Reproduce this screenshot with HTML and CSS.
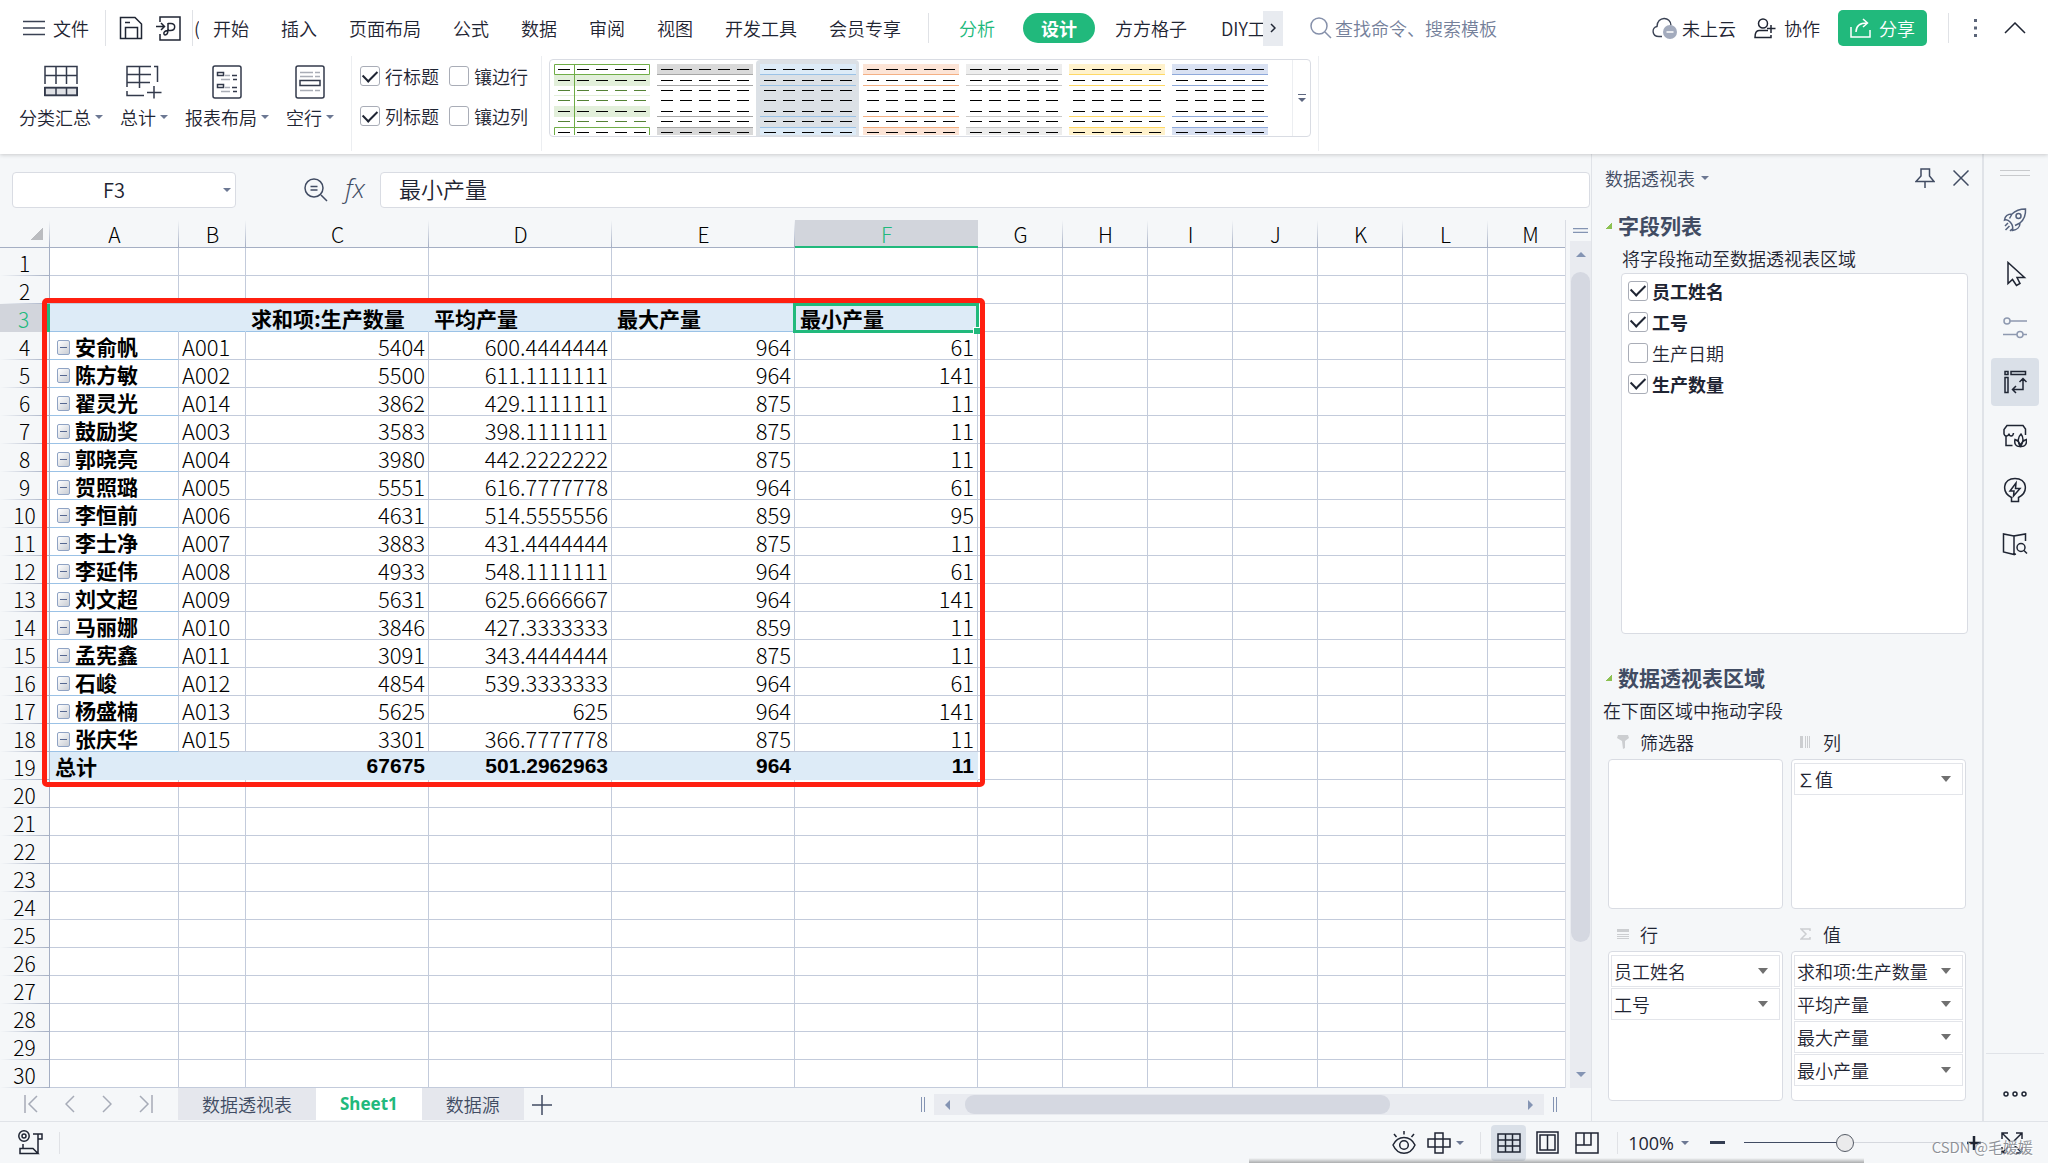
FILE: index.html
```html
<!DOCTYPE html>
<html lang="zh-CN">
<head>
<meta charset="utf-8">
<meta name="viewport" content="width=device-width, initial-scale=1">
<title>数据透视表</title>
<link rel="stylesheet" href="styles.css">
</head>
<body>
<svg class="defs" aria-hidden="true">
  <symbol id="dashes" viewBox="0 0 96 71">
    <path stroke-width="1" stroke-dasharray="12 7" fill="none" d="M4 5.500H92M4 16.500H92M4 26.500H92M4 36.500H92M4 47.500H92M4 57.500H92M4 68.500H92"/>
  </symbol>
  <symbol id="style-light" viewBox="0 0 96 71">
    <path class="band" d="M0 0H96V10H0zM0 63H96V71H0z"/>
    <path class="rule" d="M0 10.500H96M0 21.500H96M0 52.500H96M0 63.500H96"/>
    <use href="#dashes" stroke="#000"/>
  </symbol>
</svg>

<header class="ribbon">
  <div class="topbar">
    <button class="file"><svg width="22" height="16" viewBox="0 0 22 16"><path d="M0 1.500H22M0 8H22M0 14.500H22" stroke="#3a4254" stroke-width="1.300"/></svg>文件</button>
    <span class="vline tall"></span>
    <button class="quick" aria-label="保存"><svg width="24" height="24" viewBox="0 0 24 24"><path d="M1.500 1.500H16L22.500 8V22.500H1.500zM6.500 22.500V11.500H18.500V22.500M6 6.500H11"/></svg></button>
    <button class="quick" aria-label="输出"><svg width="25" height="25" viewBox="0 0 25 25"><path d="M4 6V1H24V24H4V18M0 10.500H8M5 7L8.500 10.500L5 14M12 7V14C12 20 7 20 8 16.500C9 14 12 14.500 14.500 14.500C20 14.500 20 7.500 15 7.500H12"/></svg></button>
    <span class="vline tall cut"></span>
    <span class="sliver">(</span>
    <nav class="tabs main-tabs">
      <a href="#">开始</a><a href="#">插入</a><a href="#">页面布局</a><a href="#">公式</a><a href="#">数据</a><a href="#">审阅</a><a href="#">视图</a><a href="#">开发工具</a><a href="#">会员专享</a>
    </nav>
    <span class="vline context"></span>
    <nav class="tabs">
      <a href="#" class="green">分析</a><a href="#" class="pill">设计</a><a href="#" class="addon">方方格子</a><a href="#" class="clip">DIY工</a>
    </nav>
    <button class="more-tabs" aria-label="更多"><svg width="6" height="10" viewBox="0 0 6 10"><path d="M1 1L5 5L1 9"/></svg></button>
    <label class="search"><svg width="22" height="22" viewBox="0 0 22 22"><circle cx="9" cy="9" r="8"/><path d="M15 15L21 21"/></svg><input type="text" placeholder="查找命令、搜索模板" aria-label="搜索"></label>
    <div class="account">
      <button class="cloud"><svg width="25" height="22" viewBox="0 0 25 22"><path d="M10 19.500H7C-.5 19.500-.5 10.500 5 9.500C5-1 19-1 19 8.500" fill="none" stroke="#3a4254" stroke-width="1.400"/><circle cx="18" cy="15" r="7" fill="#a3abbd" stroke="none"/><path d="M14.500 15H21.500" stroke="#fff" stroke-width="1.500"/></svg>未上云</button>
      <button class="collab"><svg width="22" height="21" viewBox="0 0 22 21"><circle cx="9" cy="5.500" r="4.500"/><path d="M14 12.500H5C2 12.500 1 15 1 19.500H17V17M17 7V15M13 10.500H21.500"/></svg>协作</button>
      <button class="share"><svg width="21" height="20" viewBox="0 0 21 20"><path d="M1 9V19H20V12M6 14C6 8 9 5 17 5M13 1L17.500 5L13 9"/></svg>分享</button>
      <span class="vline"></span>
      <button class="dots" aria-label="更多"><svg width="3" height="18" viewBox="0 0 3 18"><path d="M0 0H3V3H0zM0 7.500H3V10.500H0zM0 15H3V18H0z" fill="#5b6478" stroke="none"/></svg></button>
      <button class="fold" aria-label="收起"><svg width="22" height="12" viewBox="0 0 22 12"><path d="M1 11L11 1L21 11"/></svg></button>
    </div>
  </div>
  <div class="tools">
    <button class="tool"><svg width="34" height="32" viewBox="0 0 34 32"><path d="M.7 22.700H33.300V30.300H.7z" fill="#dfe1e5"/><path d="M1 19V1.500H33V19M12 1.500V19M22.500 1.500V19M1 10.500H33M1 22.500H33V30.500H1zM12 22.500V30.500M22.500 22.500V30.500"/></svg><span>分类汇总<i class="caret"></i></span></button>
    <button class="tool"><svg width="36" height="34" viewBox="0 0 36 34"><path d="M25 1.500H1V22M1 9.500H25M1 17.500H24M13.500 1.500V23M28 1.500H31.500V17M1 26V30.500H18M28 21V33.500M21 27.500H35.500"/></svg><span>总计<i class="caret"></i></span></button>
    <button class="tool"><svg width="30" height="34" viewBox="0 0 30 34"><rect x="1" y="1" width="28" height="32" rx="2"/><path d="M5.500 7.500H11.500V10.500H5.500zM5.500 19.500H11.500V22.500H5.500zM20 10.500H25M21 14.500H25M20 22.500H25M21 26.500H25"/><path class="pale" d="M13 10.500H18M9 14.500H18M13 22.500H18M9 26.500H18"/></svg><span>报表布局<i class="caret"></i></span></button>
    <button class="tool"><svg width="30" height="34" viewBox="0 0 30 34"><rect x="1" y="1" width="28" height="32" rx="2"/><path d="M5 15.500H25V20.500H5z"/><path class="pale" d="M5 7.500H18M20 7.500H25M5 11.500H18M20 11.500H25M5 25.500H18M20 25.500H25"/></svg><span>空行<i class="caret"></i></span></button>
    <span class="vline"></span>
    <div class="checks">
      <label><input type="checkbox" checked>行标题</label><label><input type="checkbox">镶边行</label>
      <label><input type="checkbox" checked>列标题</label><label><input type="checkbox">镶边列</label>
    </div>
    <span class="vline"></span>
    <div class="gallery">
      <button class="thumb" aria-label="样式 1"><svg width="96" height="71" viewBox="0 0 96 71"><path fill="#e2efda" d="M0 11H96V22H0zM0 31H96V32H0zM0 42H96V53H0z"/><path fill="none" stroke="#70ad47" d="M.5 .5H95.500V10.500H.5zM20.500 0V71M.5 71V63.500H95.500V71"/><path stroke="#548235" stroke-dasharray="12 7" d="M4 26.500H92M4 36.500H92M4 57.500H92"/><path stroke="#000" stroke-dasharray="12 7" d="M4 5.500H92M4 16.500H92M4 47.500H92M4 68.500H92"/></svg></button>
      <button class="thumb grey" aria-label="样式 2"><svg width="96" height="71"><use href="#style-light"/></svg></button>
      <button class="thumb blue" aria-label="样式 3"><svg width="96" height="71"><use href="#style-light"/></svg></button>
      <button class="thumb orange" aria-label="样式 4"><svg width="96" height="71"><use href="#style-light"/></svg></button>
      <button class="thumb silver" aria-label="样式 5"><svg width="96" height="71"><use href="#style-light"/></svg></button>
      <button class="thumb yellow" aria-label="样式 6"><svg width="96" height="71"><use href="#style-light"/></svg></button>
      <button class="thumb indigo" aria-label="样式 7"><svg width="96" height="71"><use href="#style-light"/></svg></button>
      <button class="expand" aria-label="更多样式"><svg width="8" height="8" viewBox="0 0 8 8"><path d="M0 0H8V1H0zM0 4H8L4 8z" fill="#5d6780"/></svg></button>
    </div>
    <span class="vline"></span>
  </div>
</header>

<main class="work">
  <section class="sheet">
    <div class="formula">
      <div class="namebox"><input type="text" value="F3" aria-label="名称框"><i class="caret"></i></div>
      <button class="lens" aria-label="浏览"><svg width="24" height="24" viewBox="0 0 24 24"><circle cx="10" cy="10" r="9"/><path d="M17 17L23 23M6.500 8.500H13.500M6.500 12H13.500"/></svg></button>
      <button class="fx">fx</button>
      <input class="content" type="text" value="最小产量" aria-label="编辑栏">
    </div>

    <div class="gridrow">
      <div class="gridwrap">
        <table class="grid">
          <colgroup><col class="c-head"><col class="c-a"><col class="c-b"><col class="c-wide" span="4"><col class="c-std" span="7"></colgroup>
          <thead><tr><th class="corner"><th>A<th>B<th>C<th>D<th>E<th class="on">F<th>G<th>H<th>I<th>J<th>K<th>L<th>M</tr></thead>
          <tbody>
          <tr><th>1<td><td><td><td><td><td><td><td><td><td><td><td><td></tr>
          <tr><th>2<td><td><td><td><td><td><td><td><td><td><td><td><td></tr>
          <tr class="fill"><th class="on">3<td><td><td>求和项:生产数量<td>平均产量<td>最大产量<td class="active">最小产量<td><td><td><td><td><td><td></tr>
          <tr class="data"><th>4<td><button></button>安俞帆<td>A001<td>5404<td>600.4444444<td>964<td>61<td><td><td><td><td><td><td></tr>
          <tr class="data"><th>5<td><button></button>陈方敏<td>A002<td>5500<td>611.1111111<td>964<td>141<td><td><td><td><td><td><td></tr>
          <tr class="data"><th>6<td><button></button>翟灵光<td>A014<td>3862<td>429.1111111<td>875<td>11<td><td><td><td><td><td><td></tr>
          <tr class="data"><th>7<td><button></button>鼓励奖<td>A003<td>3583<td>398.1111111<td>875<td>11<td><td><td><td><td><td><td></tr>
          <tr class="data"><th>8<td><button></button>郭晓亮<td>A004<td>3980<td>442.2222222<td>875<td>11<td><td><td><td><td><td><td></tr>
          <tr class="data"><th>9<td><button></button>贺照璐<td>A005<td>5551<td>616.7777778<td>964<td>61<td><td><td><td><td><td><td></tr>
          <tr class="data"><th>10<td><button></button>李恒前<td>A006<td>4631<td>514.5555556<td>859<td>95<td><td><td><td><td><td><td></tr>
          <tr class="data"><th>11<td><button></button>李士净<td>A007<td>3883<td>431.4444444<td>875<td>11<td><td><td><td><td><td><td></tr>
          <tr class="data"><th>12<td><button></button>李延伟<td>A008<td>4933<td>548.1111111<td>964<td>61<td><td><td><td><td><td><td></tr>
          <tr class="data"><th>13<td><button></button>刘文超<td>A009<td>5631<td>625.6666667<td>964<td>141<td><td><td><td><td><td><td></tr>
          <tr class="data"><th>14<td><button></button>马丽娜<td>A010<td>3846<td>427.3333333<td>859<td>11<td><td><td><td><td><td><td></tr>
          <tr class="data"><th>15<td><button></button>孟宪鑫<td>A011<td>3091<td>343.4444444<td>875<td>11<td><td><td><td><td><td><td></tr>
          <tr class="data"><th>16<td><button></button>石峻<td>A012<td>4854<td>539.3333333<td>964<td>61<td><td><td><td><td><td><td></tr>
          <tr class="data"><th>17<td><button></button>杨盛楠<td>A013<td>5625<td>625<td>964<td>141<td><td><td><td><td><td><td></tr>
          <tr class="data"><th>18<td><button></button>张庆华<td>A015<td>3301<td>366.7777778<td>875<td>11<td><td><td><td><td><td><td></tr>
          <tr class="fill total"><th>19<td>总计<td><td>67675<td>501.2962963<td>964<td>11<td><td><td><td><td><td><td></tr>
          <tr><th>20<td><td><td><td><td><td><td><td><td><td><td><td><td></tr>
          <tr><th>21<td><td><td><td><td><td><td><td><td><td><td><td><td></tr>
          <tr><th>22<td><td><td><td><td><td><td><td><td><td><td><td><td></tr>
          <tr><th>23<td><td><td><td><td><td><td><td><td><td><td><td><td></tr>
          <tr><th>24<td><td><td><td><td><td><td><td><td><td><td><td><td></tr>
          <tr><th>25<td><td><td><td><td><td><td><td><td><td><td><td><td></tr>
          <tr><th>26<td><td><td><td><td><td><td><td><td><td><td><td><td></tr>
          <tr><th>27<td><td><td><td><td><td><td><td><td><td><td><td><td></tr>
          <tr><th>28<td><td><td><td><td><td><td><td><td><td><td><td><td></tr>
          <tr><th>29<td><td><td><td><td><td><td><td><td><td><td><td><td></tr>
          <tr><th>30<td><td><td><td><td><td><td><td><td><td><td><td><td></tr>
          </tbody>
        </table>
        <div class="redbox"></div>
      </div>
      <div class="vscroll">
        <svg class="split" width="15" height="5" viewBox="0 0 15 5"><path d="M0 .5H15M0 4.500H15" stroke="#8494b3"/></svg>
        <div class="vtrack"><i class="tri up"></i><div class="vthumb"></div><i class="tri down"></i></div>
      </div>
    </div>

    <div class="sheetbar">
      <div class="sheetnav">
        <button aria-label="第一张"><svg width="14" height="18" viewBox="0 0 14 18"><path d="M1 0V18M13 1L5 9L13 17"/></svg></button>
        <button aria-label="上一张"><svg width="10" height="18" viewBox="0 0 10 18"><path d="M9 1L1 9L9 17"/></svg></button>
        <button aria-label="下一张"><svg width="10" height="18" viewBox="0 0 10 18"><path d="M1 1L9 9L1 17"/></svg></button>
        <button aria-label="最后一张"><svg width="14" height="18" viewBox="0 0 14 18"><path d="M13 0V18M1 1L9 9L1 17"/></svg></button>
      </div>
      <button class="stab">数据透视表</button><button class="stab current">Sheet1</button><button class="stab">数据源</button>
      <button class="addsheet" aria-label="新建"><svg width="20" height="20" viewBox="0 0 20 20"><path d="M10 0V20M0 10H20" stroke="#414c63" stroke-width="1.500"/></svg></button>
      <div class="hscroll">
        <i class="grip"></i>
        <div class="htrack"><i class="tri left"></i><div class="hthumb"></div><i class="tri right"></i></div>
        <i class="grip"></i>
      </div>
    </div>
  </section>

  <aside class="panel">
    <div class="panelhead">
      <button class="ptitle">数据透视表<i class="caret"></i></button>
      <button class="pin" aria-label="固定"><svg width="20" height="20" viewBox="0 0 20 20"><path d="M6 1H14.500V8L19 13.500H1L6 8zM10 13.500V20"/></svg></button>
      <button aria-label="关闭"><svg width="16" height="16" viewBox="0 0 16 16"><path d="M.5 .5L15.500 15.500M15.500 .5L.5 15.500"/></svg></button>
    </div>
    <h2><i></i>字段列表</h2>
    <p class="hint indent">将字段拖动至数据透视表区域</p>
    <div class="fields">
      <label class="used"><input type="checkbox" checked>员工姓名</label>
      <label class="used"><input type="checkbox" checked>工号</label>
      <label><input type="checkbox">生产日期</label>
      <label class="used"><input type="checkbox" checked>生产数量</label>
    </div>
    <h2><i></i>数据透视表区域</h2>
    <p class="hint">在下面区域中拖动字段</p>
    <div class="areas">
      <section><h3><svg width="12" height="14" viewBox="0 0 12 14"><path d="M1 0H11L12 3L8 6V13L6 14L5 6L0 3z" fill="#ccced1"/></svg>筛选器</h3><div class="drop"></div></section>
      <section><h3><svg width="12" height="12" viewBox="0 0 12 12"><path d="M0 0H3V12H0zM5 0H6V12H5zM7 0H8V12H7zM9 0H10V12H9z" fill="#ccced1"/></svg>列</h3><div class="drop"><button>∑值<i></i></button></div></section>
      <section><h3><svg width="12" height="12" viewBox="0 0 12 12"><path d="M0 1H12V4H0zM0 6H12V7H0zM0 8H12V9H0zM0 10H12V11H0z" fill="#ccced1"/></svg>行</h3><div class="drop"><button>员工姓名<i></i></button><button>工号<i></i></button></div></section>
      <section><h3><svg width="12" height="12" viewBox="0 0 12 12"><path d="M10 3V1H1L6 6L1 11H10V9" fill="none" stroke="#ccced1" stroke-width="1.500"/></svg>值</h3><div class="drop"><button>求和项:生产数量<i></i></button><button>平均产量<i></i></button><button>最大产量<i></i></button><button>最小产量<i></i></button></div></section>
    </div>
  </aside>

  <nav class="rail">
    <span class="railgrip"></span>
    <button aria-label="推荐" class="slate"><svg width="24" height="24" viewBox="0 0 24 24"><path d="M22.500 1C14 1 11 4 9 6C5 6 2 8 1.500 12C5 10.500 11 16 9.500 22.500C14 22 17 19 17 15C20.500 12 23 8 22.500 1zM9 6L6.500 10.500M17 15L12 17.500M5 15L2 18M6.500 18L2.500 22M9 21L7 23"/><circle cx="15.500" cy="8" r="2.500"/></svg></button>
    <button aria-label="选择"><svg width="24" height="26" viewBox="0 0 24 26"><path d="M5 1.500V22.500L9.500 18.500L13.500 24.500L17 22.500L14 16.500H21.500z"/></svg></button>
    <button aria-label="属性" class="mist"><svg width="24" height="22" viewBox="0 0 24 22"><circle cx="4" cy="4" r="3"/><circle cx="17" cy="17.500" r="3"/><path d="M7 4H24M0 17.500H14M20 17.500H24"/></svg></button>
    <button aria-label="数据透视表" class="on"><svg width="24" height="24" viewBox="0 0 24 24"><path d="M2 1.500H5V4.500H2zM8 1.500H22.500V4.500H8zM2 7.500H5V22.500H2zM20 9V19.500H10M16.500 12L20 8.500L23.500 12M13 16L9.500 19.500L13 23"/></svg></button>
    <button aria-label="稻壳"><svg width="24" height="24" viewBox="0 0 24 24"><path d="M22.500 11V5L20 1.500H4L1 5.500V10C2 13 5.500 12.500 6 9.500C6.500 13 10 13 10.500 9M3 12.500V21.500H9.500M17.500 22.500C14 18 15 13 18 10C20.500 13 21 18 17.500 22.500zM12 15.500C11 20 13 23 17.500 22.500C17 19 15 16.500 12 15.500zM23.500 15.500C24 20 22 23 17.500 22.500C18 19 20 16.500 23.500 15.500z"/></svg></button>
    <button aria-label="灵感"><svg width="24" height="26" viewBox="0 0 24 26"><path d="M8.500 24.500V20.500C-2 15 0 1.500 12 1.500S26 15 15.500 20.500V24.500zM13 6L7 14H11L10.500 19L17 11.500H12.500z"/></svg></button>
    <button aria-label="帮助"><svg width="26" height="24" viewBox="0 0 26 24"><path d="M12 4L1.500 2V20L12 22.500V4L23.500 2V9M12 22.500L14 22"/><circle cx="19" cy="15.500" r="4"/><path d="M22 18.500L25 21.500"/></svg></button>
    <button class="raildots" aria-label="更多"><svg width="24" height="6" viewBox="0 0 24 6"><circle cx="3" cy="3" r="2"/><circle cx="12" cy="3" r="2"/><circle cx="21" cy="3" r="2"/></svg></button>
  </nav>
</main>

<footer class="status">
  <button class="macro" aria-label="宏"><svg width="25" height="25" viewBox="0 0 25 25"><circle cx="6" cy="6" r="5.200"/><circle cx="6" cy="6" r="2"/><path d="M15 4H20V23M20 4H24V9H20M5 14V18M2 18.500H15L20 23.500H2z"/></svg></button>
  <span class="vline"></span>
  <div class="views">
    <button aria-label="护眼"><svg width="24" height="24" viewBox="0 0 24 24"><path d="M1 14C6 4 18 4 23 14C18 25 6 25 1 14zM12 0V3.500M2 3L4.500 6M22 3L19.500 6"/><circle cx="12" cy="14" r="4.300"/></svg></button>
    <button class="cross" aria-label="阅读"><svg width="24" height="22" viewBox="0 0 24 22"><path d="M8 1H16V21H8zM1 7H23V15H1z"/></svg><i class="caret"></i></button>
    <span class="vline"></span>
    <button class="viewon" aria-label="普通"><svg width="24" height="20" viewBox="0 0 24 20"><path d="M1 1H23V19H1zM8.500 1V19M15.500 1V19M1 7H23M1 13H23"/></svg></button>
    <button class="page" aria-label="分页"><svg width="23" height="23" viewBox="0 0 23 23"><path d="M1 1H22V22H1zM4 4H19V19H4zM11.500 4V19"/></svg></button>
    <button class="read" aria-label="布局"><svg width="24" height="22" viewBox="0 0 24 22"><path d="M1 1H23V21H1zM1 13H16V1M9 1V13"/></svg></button>
    <span class="vline"></span>
    <button class="percent">100%<i class="caret"></i></button>
    <button class="minus" aria-label="缩小"><svg width="15" height="3" viewBox="0 0 15 3"><path d="M0 0H15V3H0z" fill="#333d52" stroke="none"/></svg></button>
    <input type="range" min="0" max="100" value="46" aria-label="缩放">
    <button class="plus" aria-label="放大"><svg width="14" height="14" viewBox="0 0 14 14"><path d="M7 0V14M0 7H14" stroke-width="2.500"/></svg></button>
    <button class="full" aria-label="全屏"><svg width="22" height="22" viewBox="0 0 22 22"><path d="M1 7V1H7M15 1H21V7M1 15V21H7M21 15V21H15M1 1L9 9M21 1L13 9M1 21L9 13M21 21L13 13"/></svg></button>
  </div>
  <span class="watermark">CSDN @毛媛媛</span>
  <i class="undershadow"></i>
</footer>
</body>
</html>
```
FILE: styles.css
```css
* { box-sizing: border-box; }

:root {
  --bg: #f5f7f9;
  --ink: #1f2533;
  --slate: #414c63;
  --green: #21b97c;
  --line: #c3cbdb;
  --edge: #d9dce3;
}

body {
  margin: 0;
  min-height: 100vh;
  display: flex;
  flex-direction: column;
  overflow: hidden;
  background: var(--bg);
  color: var(--ink);
  font: 350 18px/24px "Noto Sans CJK SC", "Noto Sans", sans-serif;
}

button, input { font: inherit; color: inherit; }
button { border: 0; padding: 0; background: none; display: flex; align-items: center; white-space: nowrap; }
a { color: inherit; text-decoration: none; }
h2, h3, p { margin: 0; }
svg { display: block; flex: none; fill: none; stroke-width: 1.5px; }
.defs { position: absolute; width: 0; height: 0; }

.vline { flex: none; width: 1px; height: 30px; background: #e0e2e6; }
.caret { flex: none; border: 4px solid transparent; border-top-color: #6c7893; border-bottom: 0; }

input[type="checkbox"] {
  appearance: none;
  flex: none;
  display: grid;
  place-items: center;
  width: 20px;
  height: 20px;
  margin: 0;
  border: 1px solid #a9adb7;
  border-radius: 3px;
  background: #fff;
}
input[type="checkbox"]:checked::after {
  content: "";
  width: 12px;
  height: 7px;
  margin-bottom: 4px;
  border: solid var(--ink);
  border-width: 0 0 2px 2px;
  transform: rotate(-45deg);
}

/* ribbon */
.ribbon { position: relative; z-index: 1; background: #fff; box-shadow: 0 1px 4px #0000002e; }
.topbar { display: flex; align-items: center; height: 56px; padding: 0 22px 0 23px; }
.topbar svg { stroke: var(--ink); }
.file { gap: 8px; }
.vline.tall { height: 36px; margin: 0 13px 0 16px; }
.quick { margin-right: 13px; }
.vline.cut { margin: 0 1px 0 -2px; }
.sliver { width: 5px; overflow: hidden; margin-right: 14px; }
.tabs { display: flex; align-items: center; white-space: nowrap; }
.main-tabs { gap: 32px; }
.context { margin: 0 30px 0 27px; }
.green { color: var(--green); }
.pill { margin: 0 20px 0 28px; padding: 3px 18px; border-radius: 15px; background: var(--green); color: #fff; font-weight: 700; }
.addon { margin-right: 34px; }
.clip { width: 42px; overflow: hidden; }
.more-tabs { width: 20px; height: 35px; justify-content: center; background: #e8ebf0; }
.search { display: flex; align-items: center; gap: 3px; margin-left: 27px; color: #74809a; }
.search .search svg, .search svg { stroke: #8590aa; }
.search input { width: 180px; padding: 0; border: 0; outline: 0; background: none; }
.search input::placeholder { color: #74809a; opacity: 1; }
.account { display: flex; align-items: center; margin-left: auto; }
.cloud { gap: 5px; }
.collab { gap: 8px; margin: 0 18px; }
.share { gap: 8px; height: 36px; padding: 0 12px; border-radius: 5px; background: var(--green); color: #fff; margin-right: 21px; }
.topbar .share svg { stroke: #fff; }
.dots { margin: 0 27px 0 25px; }

.tools { display: flex; align-items: flex-start; height: 98px; padding-left: 19px; }
.tools > .vline { height: 95px; background: #eceef1; }
.tool { flex-direction: column; height: 73px; margin-right: 17px; padding-top: 9px; justify-content: space-between; }
.tool svg { stroke: #333a4b; }
.tool .pale { stroke: #a9adb6; }
.tool span { display: flex; align-items: center; gap: 4px; }
.checks { display: grid; grid-template-columns: auto auto; column-gap: 10px; grid-auto-rows: 40px; margin: 0 13px 0 8px; white-space: nowrap; }
.checks label { display: flex; align-items: center; gap: 5px; }
.gallery { display: flex; width: 762px; height: 78px; margin: 3px 7px 0; border: 1px solid var(--edge); border-radius: 4px; overflow: hidden; }
.thumb { --band: #d9d9d9; --rule: #a6a6a6; align-items: flex-start; padding: 4px 3px 0 4px; }
.band { fill: var(--band); }
.rule { stroke: var(--rule); stroke-width: 1px; }
.thumb svg { stroke-width: 1px; }
.blue { --band: #ddebf7; --rule: #9bc2e6; background: #dce1e6; border-radius: 4px 4px 0 0; }
.orange { --band: #fce4d6; --rule: #f4b084; }
.silver { --band: #ededed; --rule: #c9c9c9; }
.yellow { --band: #fff2cc; --rule: #ffd966; }
.indigo { --band: #d9e1f2; --rule: #8ea9db; }
.expand { margin-left: auto; width: 18px; justify-content: center; border-left: 1px solid #eceef1; }

/* work area */
.work { flex: 1; display: flex; min-height: 0; }
.sheet { flex: 1; min-width: 0; display: flex; flex-direction: column; }

.formula { display: flex; align-items: center; height: 66px; padding: 6px 1px 0 12px; }
.formula svg { stroke: var(--slate); }
.namebox, .content { height: 36px; border: 1px solid var(--edge); border-radius: 4px; background: #fff; }
.namebox { display: flex; align-items: center; width: 224px; padding-right: 4px; }
.namebox input { flex: 1; min-width: 0; border: 0; padding: 0 8px 0 0; background: none; text-align: center; font-size: 20px; }
.lens { margin-left: 68px; }
.fx { width: 24px; margin: 0 13px 4px 15px; justify-content: center; font: italic 300 26px/30px "Open Sans", sans-serif; color: var(--slate); }
.content { flex: 1; min-width: 0; padding: 0 18px 4px; font-size: 22px; }

.gridrow { flex: 1; display: flex; min-height: 0; }
.gridwrap { position: relative; flex: 1; min-width: 0; overflow: hidden; border-right: 1px solid var(--edge); }
.grid { table-layout: fixed; width: 100%; border-spacing: 0; font-size: 22px; line-height: 22px; color: #000; }
.c-head { width: 50px; }
.c-a { width: 129px; }
.c-b { width: 67px; }
.c-wide { width: 183px; }
.c-std { width: 85px; }
.grid th, .grid td { height: 28px; padding: 1px 3px 0; border: 0; white-space: nowrap; }
.grid td { background: #fff; border: solid var(--line); border-width: 0 1px 1px 0; text-align: left; font-weight: 300; }
.grid tr > :last-child { border-right: 0; }
.grid th { font-weight: 300; font-size: 21px; text-align: center; }
.grid thead th { border-bottom: 1px solid #a5afc4; background: linear-gradient(transparent, #a5afc4) right / 1px 100% no-repeat; }
.grid tbody th { border-right: 1px solid #a5afc4; background: linear-gradient(to right, transparent, #a5afc4) bottom / 100% 1px no-repeat; }
.grid thead .corner { background: linear-gradient(to bottom right, transparent 50%, #babcc0 50%) 30px 7px / 13px 13px no-repeat, linear-gradient(transparent, #a5afc4) right / 1px 100% no-repeat; }
.grid thead .on { background: #d2d5dc; color: var(--green); border-bottom: 2px solid var(--green); }
.grid tbody .on { background: #d2d5dc; color: var(--green); border-right: 3px solid var(--green); }
.data td:nth-child(n+4) { text-align: right; }
.grid .data td:nth-child(2) { font-weight: 700; font-size: 21px; border-bottom-color: #9bc2e6; padding-left: 7px; }
.data button { display: inline-block; vertical-align: 1px; width: 13px; height: 15px; margin-right: 5px; border: 1px solid #8fa3c4; border-radius: 2px; background: linear-gradient(#566891, #566891) center / 7px 1px no-repeat, linear-gradient(135deg, #fff, #c9cdd4); }
.grid .fill td:nth-child(-n+7) { background: #ddebf7; border-right-color: transparent; border-bottom-color: #9bc2e6; font-weight: 700; font-size: 21px; padding-left: 5px; }
.grid .total td:nth-child(-n+7) { border-bottom-color: #ddebf7; }
.total td:nth-child(n+4) { text-align: right; }
.grid .total td:nth-child(n+4) { font: 700 21px/22px "Liberation Sans", sans-serif; }
.active { position: relative; }
.active::before { content: ""; position: absolute; inset: -1px -2px -2px; border: 3px solid var(--green); }
.active::after { content: ""; position: absolute; right: -3px; bottom: -3px; width: 6px; height: 6px; border: solid #fff; border-width: 1px 0 0 1px; background: var(--green); }
.redbox { position: absolute; left: 42px; top: 78px; width: 943px; height: 489px; border: 5px solid #ff1f10; border-radius: 5px; }

.tri { display: block; border: 5px solid transparent; }
.up { border-bottom-color: #8494b3; border-top: 0; }
.down { border-top-color: #8494b3; border-bottom: 0; }
.left { border-right-color: #8494b3; border-left: 0; }
.right { border-left-color: #8494b3; border-right: 0; }
.vscroll { display: flex; flex-direction: column; align-items: center; width: 25px; padding-left: 4px; }
.split { margin: 8px 0; }
.vtrack { flex: 1; display: flex; flex-direction: column; align-items: center; width: 21px; padding: 11px 0; background: #e9ebf0; }
.vthumb { width: 19px; height: 670px; margin: 15px 0 auto; border-radius: 10px; background: #d5d8e1; }

.sheetbar { display: flex; height: 33px; }
.sheetnav { display: flex; align-items: center; justify-content: space-between; width: 178px; padding: 0 25px 2px 24px; }
.sheetnav svg { stroke: #a6abb7; }
.stab { padding: 0 24px; margin-bottom: 1px; background: #e5e7ed; color: var(--slate); }
.current { background: #fff; color: var(--green); font: 700 17px/24px "Noto Sans", sans-serif; }
.addsheet { margin-left: 8px; }
.hscroll { display: flex; align-items: center; gap: 9px; width: 636px; margin-left: auto; margin-right: 34px; }
.grip { flex: none; width: 4px; height: 15px; border: solid #8494b3; border-width: 0 1px; }
.htrack { flex: 1; display: flex; align-items: center; height: 21px; padding: 0 11px; background: #e9ebf0; }
.hthumb { width: 425px; height: 19px; margin: 0 auto 0 15px; border-radius: 9px; background: #d5d8e1; }

/* pivot panel */
.panel { flex: none; display: flex; flex-direction: column; width: 391px; padding: 0 16px 20px; border-left: 1px solid #e0e3e8; }
.panelhead { display: flex; align-items: center; height: 48px; margin: 0 -3px 2px; color: var(--slate); }
.panelhead svg { stroke: var(--slate); }
.ptitle { gap: 6px; }
.pin { margin: 0 18px 0 auto; }
.panel h2 { display: flex; align-items: center; gap: 6px; margin-left: -3px; padding-top: 7px; font-size: 21px; line-height: 28px; font-weight: 700; color: var(--slate); }
.panel h2 i { border: solid transparent; border-width: 7px 0 0 7px; background: linear-gradient(to bottom right, transparent 50%, #8cc152 50%) border-box; }
.hint { padding: 7px 0 3px; margin-left: -5px; }
.hint.indent { margin-left: 14px; }
.fields { flex: 1; min-height: 140px; margin: 0 -2px 22px 13px; padding: 1px 6px; border: 1px solid var(--edge); border-radius: 4px; background: #fff; }
.fields label { display: flex; align-items: center; gap: 4px; height: 31px; }
.used { font-weight: 700; }
.areas { display: grid; grid-template-columns: 1fr 1fr; column-gap: 8px; row-gap: 8px; }
.areas h3 { display: flex; align-items: center; gap: 11px; height: 34px; padding-left: 9px; font-size: 18px; font-weight: inherit; }
.drop { display: flex; flex-direction: column; gap: 1px; height: 150px; padding: 3px 2px; border: 1px solid var(--edge); border-radius: 4px; background: #fff; }
.drop button { justify-content: space-between; height: 32px; padding: 0 11px 0 2px; border: 1px solid #e3e5ea; }
.drop i { border: 5px solid transparent; border-top: 6px solid #707070; border-bottom: 0; }

/* right rail */
.rail { flex: none; display: flex; flex-direction: column; align-items: center; gap: 6px; width: 66px; padding: 16px 2px 0 0; border-left: 2px solid #e0e3e8; }
.railgrip { width: 30px; height: 6px; margin-bottom: 14px; border: solid #c8cacd; border-width: 1px 0; }
.rail button { width: 48px; height: 48px; justify-content: center; border-radius: 4px; }
.rail svg { stroke: var(--ink); }
.rail .slate svg { stroke: #53607c; }
.rail .mist svg { stroke: #8e99b0; }
.rail .on { background: #dae0e8; }
.rail .raildots { width: 58px; height: 68px; margin-top: auto; padding-top: 12px; border-top: 1px solid #e0e3e8; border-radius: 0; }

/* status bar */
.status { position: relative; display: flex; align-items: center; height: 42px; padding: 0 25px 0 18px; border-top: 1px solid #e0e3e8; }
.status svg { stroke: var(--ink); }
.status .vline { height: 22px; }
.macro { margin-right: 16px; }
.views { display: flex; align-items: center; height: 100%; margin-left: auto; }
.cross { gap: 5px; margin: 0 16px 0 11px; }
.viewon { justify-content: center; width: 35px; height: 36px; margin: 0 10px; border-radius: 4px; background: #dae0e8; }
.read { margin: 0 18px 0 16px; }
.percent { gap: 7px; margin: 0 21px 0 10px; font: 400 18px/24px "Open Sans", sans-serif; }
.status input { appearance: none; width: 218px; height: 18px; margin: 0 5px 0 19px; background: linear-gradient(to right, #414c63 46%, #d5d8de 46%) center / 100% 1px no-repeat; }
.status input::-webkit-slider-thumb { appearance: none; width: 18px; height: 18px; border: 1px solid #555b66; border-radius: 50%; background: #ebebec; }
.full { margin-left: 20px; }
.watermark { position: absolute; right: 15px; bottom: 6px; font-size: 15px; line-height: 20px; color: #8d9096; text-shadow: 1px 1px #fff; }
.undershadow { position: absolute; left: 61%; right: 9%; bottom: 0; height: 5px; background: linear-gradient(transparent, #0000004d); }
```
